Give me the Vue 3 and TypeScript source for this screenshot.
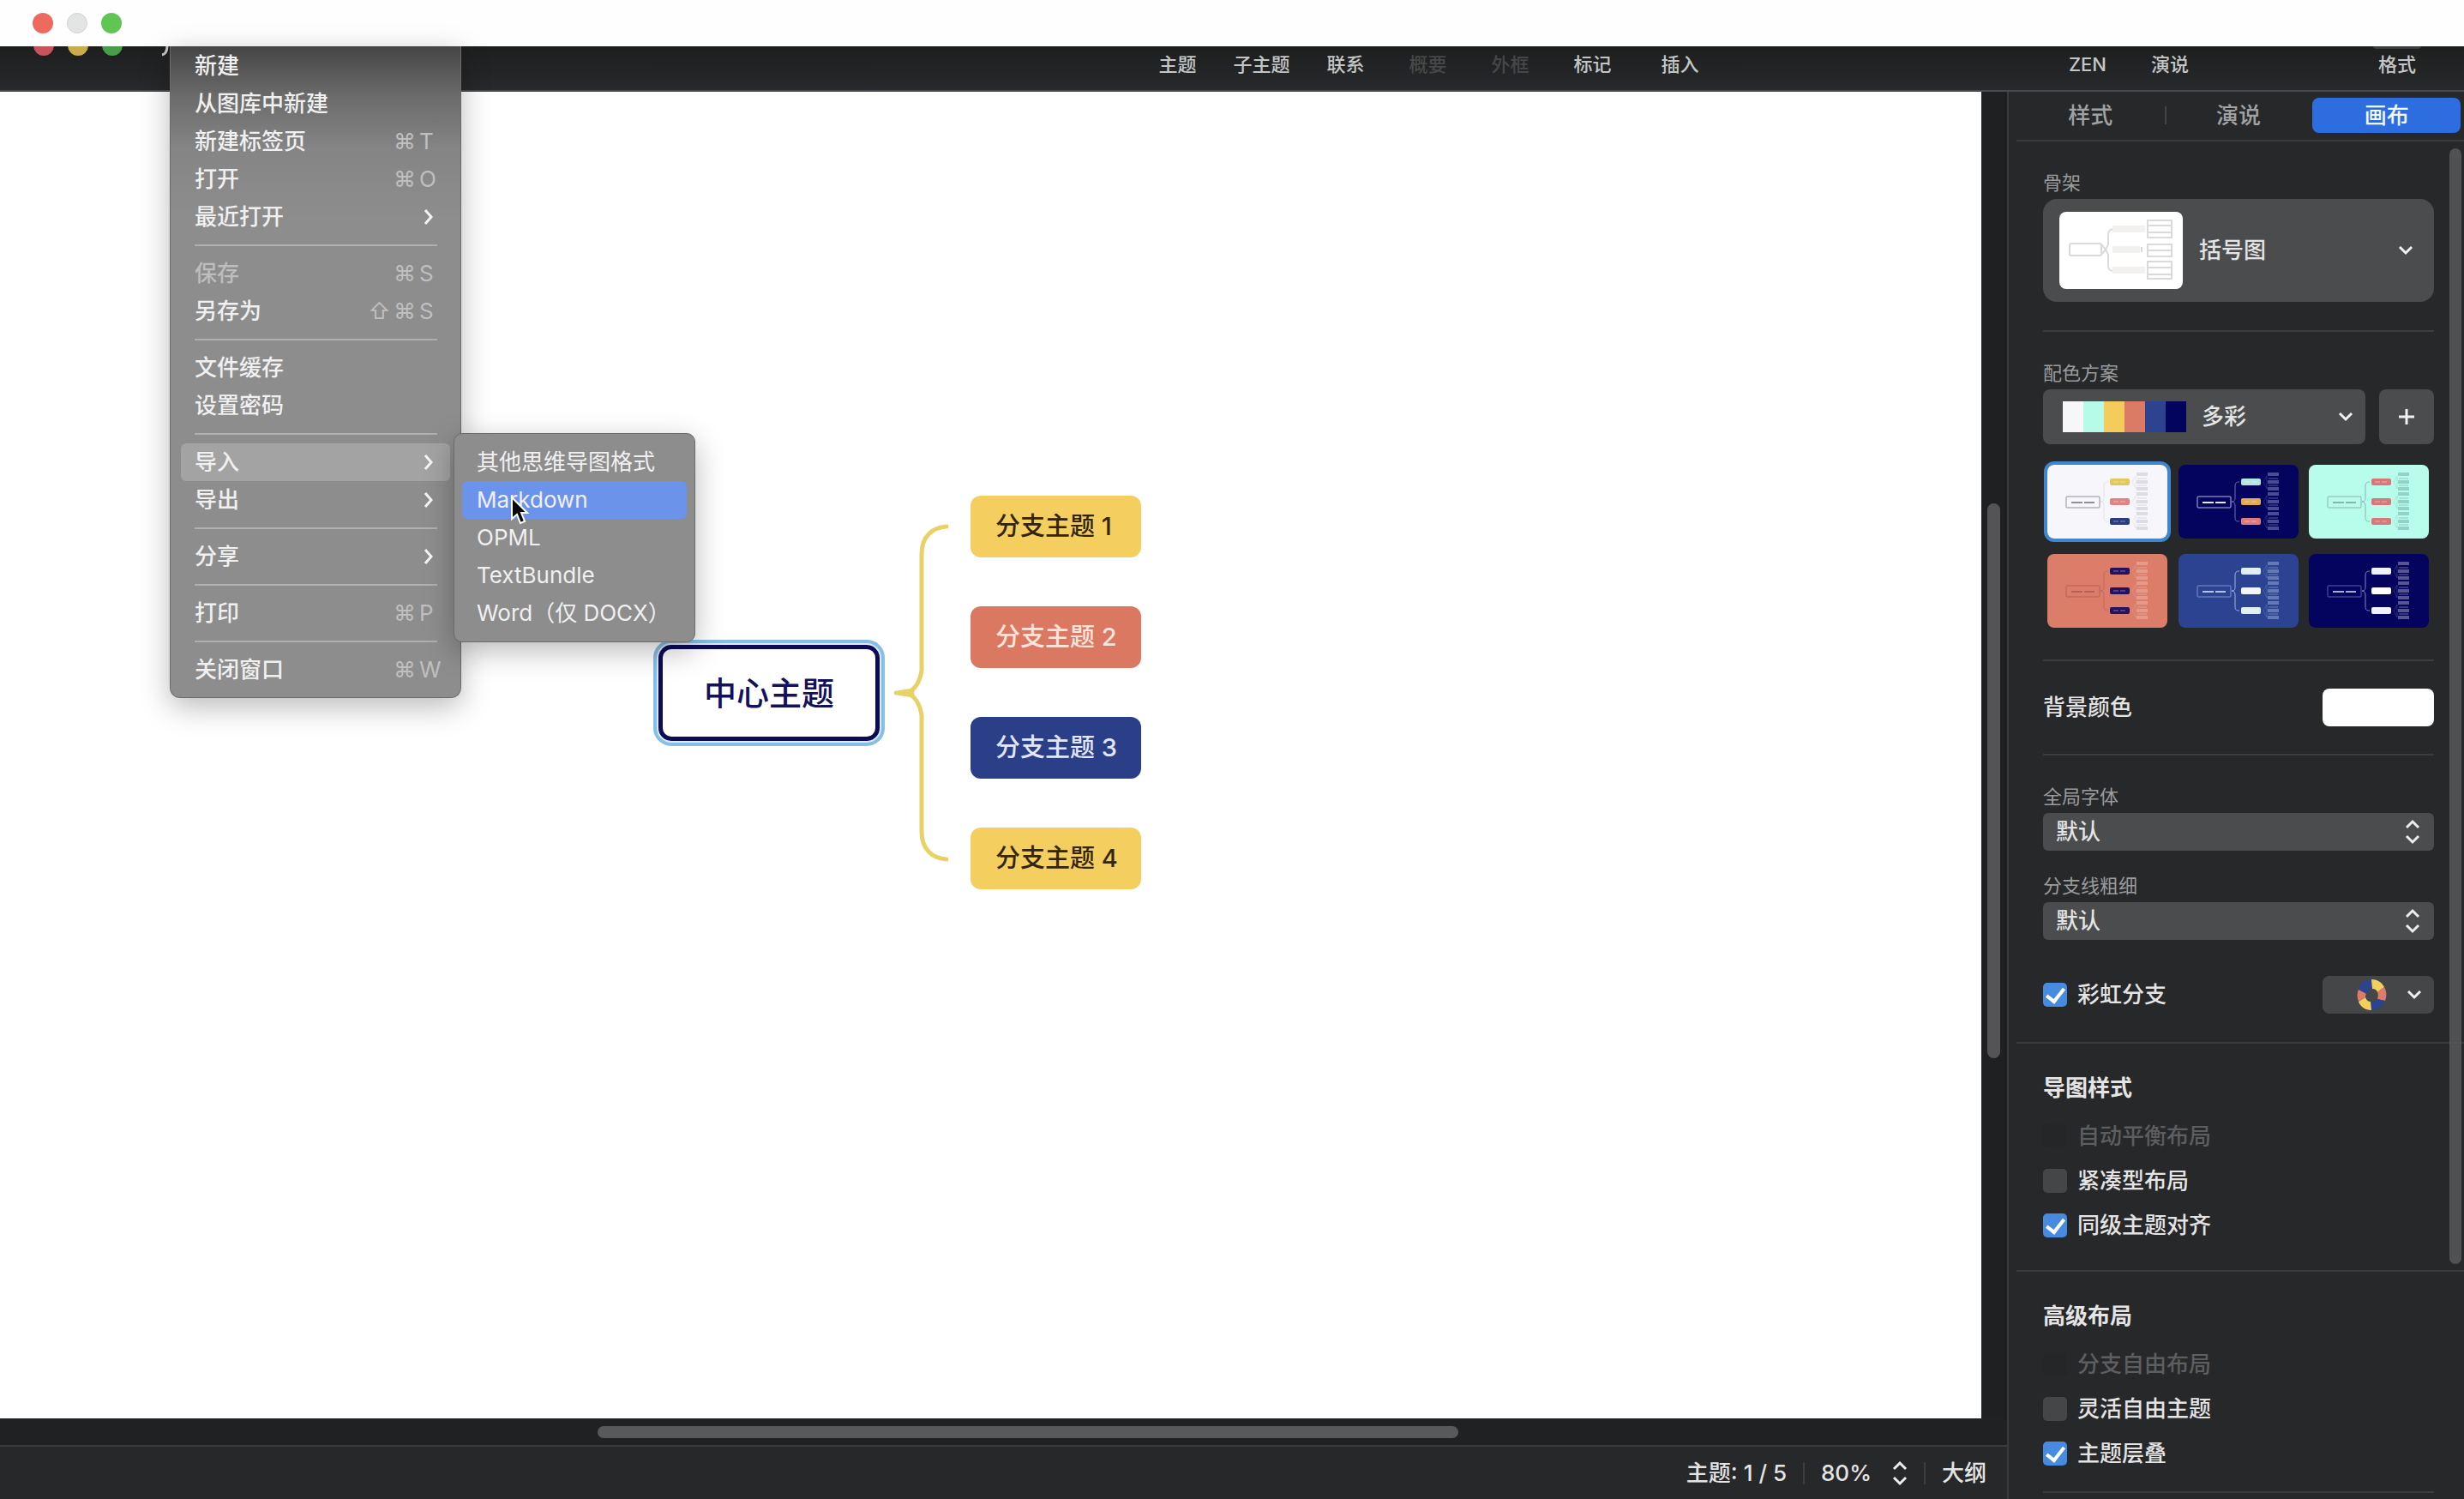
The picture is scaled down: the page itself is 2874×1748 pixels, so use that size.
<script setup lang="ts">
import { ref } from 'vue'

interface MenuEntry {
  label: string
  keys?: [string, string, string]
  submenu?: boolean
  disabled?: boolean
  active?: boolean
}

const menuGroups: MenuEntry[][] = [
  [
    { label: '新建' },
    { label: '从图库中新建' },
    { label: '新建标签页', keys: ['', '⌘', 'T'] },
    { label: '打开', keys: ['', '⌘', 'O'] },
    { label: '最近打开', submenu: true },
  ],
  [
    { label: '保存', keys: ['', '⌘', 'S'], disabled: true },
    { label: '另存为', keys: ['⇧', '⌘', 'S'] },
  ],
  [{ label: '文件缓存' }, { label: '设置密码' }],
  [
    { label: '导入', submenu: true, active: true },
    { label: '导出', submenu: true },
  ],
  [{ label: '分享', submenu: true }],
  [{ label: '打印', keys: ['', '⌘', 'P'] }],
  [{ label: '关闭窗口', keys: ['', '⌘', 'W'] }],
]

const importFormats = ['其他思维导图格式', 'Markdown', 'OPML', 'TextBundle', 'Word（仅 DOCX）']
const activeFormat = 'Markdown'

const tools = [
  { label: '主题' },
  { label: '子主题' },
  { label: '联系' },
  { label: '概要', disabled: true },
  { label: '外框', disabled: true },
  { label: '标记' },
  { label: '插入' },
]

const branches = [
  { label: '分支主题 1', tone: 'yellow' },
  { label: '分支主题 2', tone: 'coral' },
  { label: '分支主题 3', tone: 'blue' },
  { label: '分支主题 4', tone: 'yellow' },
]

const palette = ['#f7f7f9', '#b5fbe8', '#f5cb5c', '#db7b65', '#2c4390', '#03045e']

interface Preview {
  bg: string
  line: string
  text: string
  nodes: [string, string, string]
  leaf: string
  spine: string
}

const previews: Preview[] = [
  { bg: '#f7f7fb', line: '#8f8f98', text: '#8f8f98', nodes: ['#e3c95c', '#e08285', '#2c3a80'], leaf: '#dcdce3', spine: '#e4e2e6' },
  { bg: '#04045e', line: '#b9bbe0', text: '#e8e8fa', nodes: ['#b4e6e0', '#e2ab52', '#e07b7c'], leaf: '#4a4b92', spine: '#6f70b4' },
  { bg: '#b8fdeb', line: '#84b8ac', text: '#84b8ac', nodes: ['#d8777a', '#d8777a', '#d8777a'], leaf: '#93d3c6', spine: '#84b8ac' },
  { bg: '#dc7d69', line: '#b5605a', text: '#b5605a', nodes: ['#25125e', '#25125e', '#25125e'], leaf: '#e59a8b', spine: '#bf6a5e' },
  { bg: '#2c4392', line: '#7f92cc', text: '#b4c2ea', nodes: ['#dceef0', '#f2f6fc', '#dff0ee'], leaf: '#6579b6', spine: '#a5b4de' },
  { bg: '#04045e', line: '#5c5ea6', text: '#a9abd8', nodes: ['#eef0fa', '#ffffff', '#eef0fa'], leaf: '#55568f', spine: '#8486bf' },
]
const nodeRows = [16, 39, 62]

const styleOptions = ref([
  { id: 'balance', label: '自动平衡布局', checked: false, disabled: true },
  { id: 'compact', label: '紧凑型布局', checked: false, disabled: false },
  { id: 'align', label: '同级主题对齐', checked: true, disabled: false },
])
const layoutOptions = ref([
  { id: 'branch-free', label: '分支自由布局', checked: false, disabled: true },
  { id: 'floating', label: '灵活自由主题', checked: false, disabled: false },
  { id: 'overlap', label: '主题层叠', checked: true, disabled: false },
])
const rainbow = ref(true)
</script>

<template>
  <div class="app">
    <header class="titlebar">
      <span class="light red"></span>
      <span class="light gray"></span>
      <span class="light green"></span>
    </header>

    <div class="toolbar">
      <div class="under-lights">
        <span class="light red"></span>
        <span class="light amber"></span>
        <span class="light green"></span>
        <svg class="tail" viewBox="0 0 10 14"><path d="M8 0C8 6 7 10 2 11" /></svg>
      </div>
      <nav class="tools">
        <button v-for="t in tools" :key="t.label" :disabled="t.disabled">{{ t.label }}</button>
      </nav>
      <div class="modes">
        <button>ZEN</button>
        <button>演说</button>
        <button class="format">格式</button>
      </div>
    </div>

    <div class="body">
      <div class="workspace">
        <div class="stage">
          <main class="canvas">
            <div class="map">
              <div class="central">中心主题</div>
              <svg class="brace" viewBox="0 0 66 396">
                <path class="stroke" d="M62 4C46 5 33 15 33 36V172C31 184 26 194 16 198C26 202 31 212 33 224V360C33 381 46 391 62 392" />
                <path class="tip" d="M1 196L20 193L26 189L24 198L26 207L20 203L1 200Z" />
              </svg>
              <ul class="branches">
                <li v-for="b in branches" :key="b.label" :class="b.tone">{{ b.label }}</li>
              </ul>
            </div>
          </main>
          <div class="vtrack"><div class="vthumb"></div></div>
        </div>
        <div class="htrack"><div class="hthumb"></div></div>
        <footer class="status">
          <span class="count">主题: 1 / 5</span>
          <span class="bar"></span>
          <button class="zoom">
            80%
            <svg class="updown" viewBox="0 0 18 30"><path d="M2 10L9 3L16 10M2 20L9 27L16 20" /></svg>
          </button>
          <span class="bar"></span>
          <button class="outline">大纲</button>
        </footer>
      </div>

      <aside class="panel">
        <nav class="tabs">
          <button>样式</button>
          <button class="split">演说</button>
          <button class="on">画布</button>
        </nav>

        <section class="first">
          <h3 class="caption">骨架</h3>
          <button class="skeleton">
            <svg class="skeleton-art" viewBox="0 0 144 90">
              <g class="ink">
                <rect x="12" y="37" width="37" height="14" rx="2" />
                <path d="M49 38L54 44L49 50M65 20C58 20 57 23 57 28V38L54 44L57 50V62C57 67 58 69 65 69" />
              </g>
              <g class="soft">
                <path d="M62 20H100M62 44H94M62 68H100" />
              </g>
              <g class="ink">
                <path d="M96 41V47" />
                <rect v-for="y in [10, 38, 58]" :key="y" x="103" :y="y" width="28" :height="y === 38 ? 14 : 20" />
                <path d="M103 16H131M103 24H131M103 45H131M103 65H131M103 73H131" />
              </g>
            </svg>
            <span>括号图</span>
            <svg class="chevron" viewBox="0 0 18 12"><path d="M2 2L9 9L16 2" /></svg>
          </button>
          <hr />
          <h3 class="caption">配色方案</h3>
          <div class="scheme-row">
            <button class="scheme">
              <span class="swatches"><i v-for="c in palette" :key="c" :style="{ background: c }"></i></span>
              <span>多彩</span>
              <svg class="chevron" viewBox="0 0 18 12"><path d="M2 2L9 9L16 2" /></svg>
            </button>
            <button class="add" aria-label="添加">
              <svg viewBox="0 0 20 20"><path d="M10 1V19M1 10H19" /></svg>
            </button>
          </div>
          <div class="previews">
            <button v-for="(p, i) in previews" :key="i" :class="{ chosen: i === 0 }">
              <svg viewBox="0 0 140 86">
                <rect width="140" height="86" :fill="p.bg" />
                <rect x="22" y="37" width="39" height="13" rx="1" fill="none" :stroke="p.line" />
                <path d="M28 44H55" :stroke="p.text" stroke-width="2" stroke-dasharray="13 2" />
                <path d="M71 20C67 20 66 22 66 25V38C66 42 65 43 62 43C65 43 66 45 66 48V61C66 65 67 66 71 66" fill="none" :stroke="p.spine" />
                <template v-for="(y, n) in nodeRows" :key="y">
                  <rect x="73" :y="y" width="23" height="8" rx="2" :fill="p.nodes[n]" />
                  <path :d="`M77 ${y + 4}H92`" stroke="#ffffff" stroke-opacity="0.4" stroke-width="1" stroke-dasharray="6 2" />
                  <path :d="`M99 ${y + 4}L103 ${y - 3}V${y + 12}Z`" fill="none" :stroke="p.leaf" stroke-opacity="0.5" />
                  <path :d="`M104 ${y - 5}H117M104 ${y + 4}H117M104 ${y + 12}H117`" :stroke="p.leaf" stroke-width="4" />
                  <path :d="`M105 ${y}H116M105 ${y + 8}H116`" :stroke="p.leaf" stroke-opacity="0.6" stroke-width="2" />
                </template>
              </svg>
            </button>
          </div>
          <hr />
          <div class="row">
            <span class="strong">背景颜色</span>
            <button class="bgcolor" aria-label="背景颜色"></button>
          </div>
          <hr />
          <label class="caption" for="font">全局字体</label>
          <div class="picker">
            <select id="font"><option>默认</option></select>
            <svg class="updown" viewBox="0 0 18 30"><path d="M2 10L9 3L16 10M2 20L9 27L16 20" /></svg>
          </div>
          <label class="caption second" for="width">分支线粗细</label>
          <div class="picker">
            <select id="width"><option>默认</option></select>
            <svg class="updown" viewBox="0 0 18 30"><path d="M2 10L9 3L16 10M2 20L9 27L16 20" /></svg>
          </div>
          <div class="row rainbow">
            <label class="check"><input v-model="rainbow" type="checkbox" /><span>彩虹分支</span></label>
            <button class="wheel" aria-label="彩虹配色">
              <svg class="ring" viewBox="0 0 36 36">
                <path d="M18 0C10 0 4 5 3 12L12 17C13 14 15 12 19 11Z" fill="#2c4390" />
                <path d="M18 0C24 0 30 3 33 9L25 15C24 12 22 11 19 11Z" fill="#f1d05e" />
                <path d="M33 9C36 14 36 20 34 25L25 23C26 20 26 17 25 15Z" fill="#dd7b6c" />
                <path d="M34 25C31 31 26 35 18 36L17 26C21 26 24 25 25 23Z" fill="#2c4390" />
                <path d="M18 36C11 36 5 32 3 26L11 21C12 24 14 26 17 26Z" fill="#f1d05e" />
                <path d="M3 26C1 21 1 16 3 12L12 17C11 18 11 20 11 21Z" fill="#dd7b6c" />
              </svg>
              <svg class="chevron" viewBox="0 0 18 12"><path d="M2 2L9 9L16 2" /></svg>
            </button>
          </div>
        </section>

        <section class="group">
          <h2>导图样式</h2>
          <label v-for="o in styleOptions" :key="o.id" class="check" :class="{ off: o.disabled }">
            <input v-model="o.checked" type="checkbox" :disabled="o.disabled" /><span>{{ o.label }}</span>
          </label>
        </section>

        <section class="group">
          <h2>高级布局</h2>
          <label v-for="o in layoutOptions" :key="o.id" class="check" :class="{ off: o.disabled }">
            <input v-model="o.checked" type="checkbox" :disabled="o.disabled" /><span>{{ o.label }}</span>
          </label>
          <hr class="last" />
        </section>
        <div class="pthumb"></div>
      </aside>
    </div>

    <div class="menu file-menu">
      <ul v-for="(g, i) in menuGroups" :key="i">
        <li v-for="m in g" :key="m.label">
          <button :class="{ hover: m.active }" :disabled="m.disabled">
            <span class="name">{{ m.label }}</span>
            <span v-if="m.keys" class="keys"><kbd v-for="(k, n) in m.keys" :key="n">{{ k }}</kbd></span>
            <svg v-if="m.submenu" class="arrow" viewBox="0 0 12 20"><path d="M2 2L9 10L2 18" /></svg>
          </button>
        </li>
      </ul>
    </div>

    <div class="menu sub-menu">
      <ul>
        <li v-for="f in importFormats" :key="f">
          <button :class="{ picked: f === activeFormat }"><span class="name">{{ f }}</span></button>
        </li>
      </ul>
    </div>

    <svg class="cursor" viewBox="0 0 22 34">
      <path d="M2 2V27L8 22L12 32L17 30L13 20H20Z" />
    </svg>
  </div>
</template>

<style>
body {
  margin: 0;
  background: #27282a;
}
</style>

<style scoped>
.app {
  position: relative;
  display: flex;
  flex-direction: column;
  min-height: 100vh;
  overflow: hidden;
  background: #242527;
  color: #e4e4e4;
  font-family: Inter, 'Noto Sans CJK SC', sans-serif;
  font-size: 26px;
  line-height: 32px;
}
.app * {
  box-sizing: border-box;
}
button,
select {
  margin: 0;
  padding: 0;
  border: 0;
  background: none;
  color: inherit;
  font: inherit;
  text-align: left;
}
ul {
  margin: 0;
  padding: 0;
  list-style: none;
}
hr {
  width: 100%;
  height: 2px;
  margin: 0;
  border: 0;
  background: #3c3d3f;
}
h2,
h3 {
  margin: 0;
}
svg {
  display: block;
  fill: none;
}

/* window chrome */
.titlebar {
  display: flex;
  align-items: center;
  gap: 16px;
  height: 54px;
  padding: 0 38px;
  background: #fefefe;
}
.light {
  width: 24px;
  height: 24px;
  border-radius: 50%;
}
.light.red { background: #ee6a5f; }
.light.gray { background: #e3e5e4; border: 1px solid #d2d4d3; }
.light.green { background: #61c554; }
.light.amber { background: #c9ac4b; }

.toolbar {
  display: flex;
  align-items: flex-start;
  justify-content: space-between;
  height: 53px;
  overflow: hidden;
  border-bottom: 2px solid #4a4a4e;
  background: linear-gradient(#1d1e1e, #28292c);
  font-size: 22px;
  font-weight: 500;
  line-height: 30px;
  color: #c4c6c6;
}
.under-lights {
  display: flex;
  gap: 16px;
  width: 460px;
  height: 26px;
  margin-top: -13px;
  padding-left: 39px;
}
.under-lights .light.red { background: #c7545d; }
.under-lights .light.green { background: #469f48; }
.tail {
  width: 10px;
  height: 14px;
  margin: 12px 0 0 28px;
  stroke: #c4c6c6;
  stroke-width: 3;
}
.tools {
  display: flex;
  gap: 52px;
  padding: 6px 0 0 460px;
}
.tools button:first-child,
.tools button:nth-child(2) {
  margin-right: -9px;
}
.tools button:last-child {
  margin-left: 6px;
}
.tools button:disabled {
  color: #464848;
}
.modes {
  display: flex;
  gap: 52px;
  padding-top: 6px;
  padding-right: 56px;
}
.modes .format {
  position: relative;
  margin-left: 169px;
}
.format::before {
  content: '';
  position: absolute;
  inset: -10px -6px auto;
  height: 7px;
  border-radius: 4px;
  background: #3b3c3d;
}

/* canvas */
.body {
  display: flex;
  flex: 1;
}
.workspace {
  display: flex;
  flex: 1;
  flex-direction: column;
}
.stage {
  display: flex;
  flex: 1;
}
.canvas {
  position: relative;
  flex: 1;
  background: #ffffff;
}
.vtrack {
  width: 30px;
  padding: 480px 8px 0 7px;
  background: #1f2022;
}
.vthumb {
  height: 647px;
  border-radius: 8px;
  background: #545456;
}
.htrack {
  height: 31px;
  padding: 9px 0 0 697px;
  background: #202123;
}
.hthumb {
  width: 1004px;
  height: 14px;
  border-radius: 7px;
  background: #58595b;
}
.status {
  display: flex;
  align-items: center;
  justify-content: flex-end;
  height: 63px;
  padding-right: 24px;
  border-top: 2px solid #3a3b3d;
  background: #27282a;
  font-weight: 500;
}
.bar {
  width: 2px;
  height: 26px;
  margin: 0 19px;
  background: #3c3d3f;
}
.zoom {
  display: flex;
  align-items: center;
  gap: 24px;
}
.updown {
  width: 18px;
  height: 30px;
  stroke: #ececec;
  stroke-width: 3;
}

.map {
  position: absolute;
  left: 762px;
  top: 471px;
  display: flex;
  align-items: center;
}
.central {
  display: flex;
  align-items: center;
  justify-content: center;
  width: 258px;
  height: 112px;
  margin: 0 12px 0 6px;
  border: 5px solid #0d0b56;
  border-radius: 15px;
  outline: 4px solid #86bfe4;
  outline-offset: 2px;
  box-shadow: 0 0 0 3px #dbe9fb;
  color: #14115a;
  font-size: 38px;
  font-weight: 500;
}
.brace {
  width: 66px;
  height: 396px;
  margin: 0 24px 0 4px;
}
.brace .stroke {
  stroke: #e8d268;
  stroke-width: 5;
  stroke-linecap: round;
}
.brace .tip {
  fill: #e8d268;
}
.branches {
  display: flex;
  flex-direction: column;
  gap: 57px;
}
.branches li {
  display: flex;
  align-items: center;
  width: 199px;
  height: 72px;
  padding-left: 29px;
  border-radius: 12px;
  font-size: 29px;
  font-weight: 500;
  white-space: nowrap;
}
.branches .yellow { background: #f4cf60; color: #33250c; }
.branches .coral { background: #da7862; color: #fbe4dc; }
.branches .blue { background: #2a3f88; color: #e2e6fa; }

/* side panel */
.panel {
  position: relative;
  width: 533px;
  border-left: 2px solid #3a3b3d;
  background: #272829;
}
.tabs {
  display: flex;
  height: 58px;
  margin-left: 9px;
  padding: 7px 4px 0 0;
  border-bottom: 2px solid #3a3b3d;
  color: #a0a1a2;
  font-weight: 500;
}
.tabs button {
  position: relative;
  flex: 1;
  height: 41px;
  text-align: center;
}
.tabs .split::before {
  content: '';
  position: absolute;
  top: 10px;
  left: 0;
  width: 2px;
  height: 21px;
  background: #444547;
}
.tabs .on {
  border-radius: 8px;
  background: #2d6de0;
  color: #f4f8ff;
}
.first {
  padding: 33px 35px 33px 40px;
}
.caption {
  display: block;
  height: 30px;
  margin-bottom: 4px;
  color: #9a9b9c;
  font-size: 22px;
  font-weight: 400;
  line-height: 30px;
}
.skeleton {
  display: flex;
  align-items: center;
  gap: 19px;
  width: 100%;
  height: 120px;
  margin-bottom: 33px;
  padding: 0 24px 0 19px;
  border-radius: 16px;
  background: #4b4c4d;
  font-weight: 500;
}
.skeleton-art {
  width: 144px;
  height: 90px;
  border-radius: 8px;
  background: #ffffff;
}
.skeleton-art .ink { stroke: #dbdadb; stroke-width: 2; }
.skeleton-art .soft { stroke: #f3f1f0; stroke-width: 8; }
.chevron {
  width: 18px;
  height: 12px;
  margin-left: auto;
  stroke: #f0f0f0;
  stroke-width: 3;
}
.first hr + .caption {
  margin-top: 33px;
}
.scheme-row {
  display: flex;
  gap: 16px;
}
.scheme,
.add {
  display: flex;
  align-items: center;
  height: 64px;
  border-radius: 8px;
  background: #4b4c4d;
  font-weight: 500;
}
.scheme {
  flex: 1;
  gap: 18px;
  padding: 0 14px 0 23px;
}
.swatches {
  display: flex;
}
.swatches i {
  width: 24px;
  height: 36px;
}
.add {
  justify-content: center;
  width: 64px;
}
.add svg {
  width: 20px;
  height: 20px;
  stroke: #f0f0f0;
  stroke-width: 3;
}
.previews {
  display: grid;
  grid-template-columns: repeat(3, 140px);
  justify-content: space-between;
  gap: 18px 0;
  margin: 24px 0 37px;
  padding: 0 6px 0 5px;
}
.previews button {
  height: 86px;
  border-radius: 8px;
}
.previews svg {
  width: 140px;
  height: 86px;
  border-radius: 8px;
}
.previews .chosen {
  box-shadow: 0 0 0 4px #3f86cf;
}
.row {
  display: flex;
  align-items: center;
  justify-content: space-between;
  height: 44px;
  margin: 32px 0;
}
.strong {
  font-weight: 500;
}
.bgcolor {
  width: 130px;
  height: 44px;
  border-radius: 8px;
  background: #ffffff;
}
.picker {
  position: relative;
}
.picker select {
  display: block;
  width: 100%;
  height: 44px;
  padding-left: 15px;
  border-radius: 6px;
  appearance: none;
  background: #4b4c4d;
  font-weight: 500;
}
.picker .updown {
  position: absolute;
  top: 7px;
  right: 16px;
  pointer-events: none;
}
.caption.second {
  margin-top: 26px;
}
.rainbow {
  margin: 42px 0 0;
}
.check {
  display: flex;
  align-items: center;
  gap: 12px;
  height: 52px;
  font-weight: 500;
}
.check input {
  display: grid;
  place-items: center;
  width: 28px;
  height: 28px;
  margin: 0;
  appearance: none;
  border-radius: 5px;
  background: #454647;
}
.check input:checked {
  background: #468bdf;
}
.check input:checked::after {
  content: '';
  width: 9px;
  height: 17px;
  margin-bottom: 4px;
  border: solid #ffffff;
  border-width: 0 4px 4px 0;
  transform: rotate(38deg);
}
.check input:disabled {
  background: #252628;
}
.check.off {
  color: #5d5e5f;
}
.wheel {
  display: flex;
  align-items: center;
  width: 130px;
  height: 44px;
  padding: 0 14px 0 39px;
  border-radius: 8px;
  background: #454647;
}
.ring {
  width: 36px;
  height: 36px;
}
.group {
  padding: 37px 35px 26px 40px;
  background: linear-gradient(#3a3b3d, #3a3b3d) 9px 0 / 100% 2px no-repeat;
}
.group h2 {
  height: 34px;
  margin-bottom: 13px;
  font-size: 26px;
  font-weight: 700;
  line-height: 34px;
}
.group:last-of-type {
  padding-bottom: 4px;
}
.last {
  margin-top: 18px;
}
.pthumb {
  position: absolute;
  top: 66px;
  right: 3px;
  width: 14px;
  height: 1301px;
  border-radius: 7px;
  background: #5a5b5ccc;
}

/* menus */
.menu {
  position: absolute;
  color: #f0f0f0;
}
.menu button {
  display: flex;
  align-items: center;
  width: 100%;
  height: 44px;
  border-radius: 6px;
  white-space: nowrap;
}
.file-menu {
  left: 198px;
  top: 54px;
  width: 340px;
  padding: 1px 12px 10px;
  border: 1px solid #6a6a6a;
  border-top: 0;
  border-radius: 0 0 12px 12px;
  background: linear-gradient(#454545, #6c6c6c 60px, #858585 120px, #8d8d8d 200px);
  box-shadow: 0 10px 34px rgba(0, 0, 0, 0.28);
}
.file-menu .name {
  font-weight: 500;
}
.file-menu button {
  padding: 0 14px 0 16px;
}
.file-menu ul + ul::before {
  content: '';
  display: block;
  height: 2px;
  margin: 10px 15px 10px 16px;
  background: #b0b0b0;
}
.file-menu button:disabled {
  color: #bdbdbd;
}
.file-menu .hover {
  background: #a3a3a3;
}
.keys {
  display: flex;
  margin-left: auto;
  color: #bfbfbf;
}
.keys kbd {
  width: 30px;
  font-family: Inter, 'DejaVu Sans', sans-serif;
  font-size: 26px;
}
.keys kbd:last-child {
  width: 22px;
}
.arrow {
  width: 12px;
  height: 20px;
  margin-left: auto;
  margin-right: 5px;
  stroke: #f4f4f4;
  stroke-width: 3;
}
.sub-menu {
  left: 529px;
  top: 505px;
  width: 282px;
  padding: 11px 9px;
  border: 1px solid #6c6c6c;
  border-radius: 10px;
  background: #8d8d8d;
  box-shadow: 0 10px 34px rgba(0, 0, 0, 0.28);
}
.sub-menu button {
  padding-left: 17px;
}
.sub-menu .picked {
  background: #6c93ea;
}
.cursor {
  position: absolute;
  left: 595px;
  top: 578px;
  width: 22px;
  height: 34px;
  fill: #0a0a0a;
  stroke: #ffffff;
  stroke-width: 2;
}
</style>
